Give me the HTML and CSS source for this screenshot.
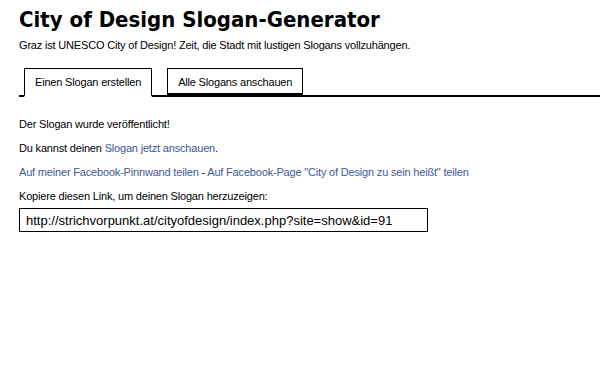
FILE: index.html
```html
<!DOCTYPE html>
<html lang="de">
<head>
    <meta charset="UTF-8">
    <title>City of Design Slogan-Generator</title>
    <link rel="stylesheet" href="styles.css">
</head>
<body>
    <div class="container">
        <h1>City of Design Slogan-Generator</h1>
        <p class="intro">Graz ist UNESCO City of Design! Zeit, die Stadt mit lustigen Slogans vollzuhängen.</p>

        <!-- Tabs -->
        <ul class="tabs">
            <li class="tab active"><a href="#">Einen Slogan erstellen</a></li>
            <li class="tab"><a href="#">Alle Slogans anschauen</a></li>
        </ul>

        <div class="content">
            <p>Der Slogan wurde veröffentlicht!</p>
            <p>Du kannst deinen <a href="#">Slogan jetzt anschauen</a>.</p>
            <p><a href="#">Auf meiner Facebook-Pinnwand teilen</a> - <a href="#">Auf Facebook-Page "City of Design zu sein heißt" teilen</a></p>
            <p class="last">Kopiere diesen Link, um deinen Slogan herzuzeigen:</p>
            <input class="share-link" type="text" value="http://strichvorpunkt.at/cityofdesign/index.php?site=show&amp;id=91">
        </div>
    </div>
</body>
</html>
```

FILE: styles.css
```css
body {
    font-family: 'Liberation Sans', Arial, sans-serif;
    font-size: 11px;
    letter-spacing: -0.18px;
    color: #000;
    background-color: #fff;
    margin: 0;
    padding: 0;
}
.container {
    padding: 6px 0 0 19px;
}
h1 {
    font-family: 'DejaVu Sans Condensed', 'DejaVu Sans', Verdana, sans-serif;
    font-stretch: condensed;
    font-size: 22px;
    font-weight: bold;
    letter-spacing: 0;
    margin: 0;
    line-height: 28px;
}
.intro {
    margin: 5px 0 0 0;
}
.tabs {
    list-style: none;
    margin: 17px 0 0 0;
    padding: 0 0 0 5px;
    display: flex;
    gap: 15px;
    border-bottom: 2px solid #000;
}
.tab {
    border: 1px solid #000;
    border-bottom: none;
    margin-bottom: -2px;
    background-color: #fff;
    height: 26px;
    padding: 0 10px;
    line-height: 26px;
}
.tab a {
    color: #000;
    text-decoration: none;
}
.tab.active {
    border-bottom: 2px solid #fff;
}
.tab:not(.active) {
    height: 24px;
    border-bottom: 2px solid #000;
}
.content {
    padding-top: 21px;
}
.content p {
    margin: 0 0 11px 0;
    line-height: 13px;
}
.content p.last {
    margin-bottom: 5px;
}
.content a {
    color: #3b5998;
    text-decoration: none;
}
.share-link {
    width: 409px;
    height: 24px;
    box-sizing: border-box;
    border: 1px solid #000;
    padding: 0 6px;
    margin: 0;
    font-family: 'Liberation Sans', Arial, sans-serif;
    font-size: 13px;
    letter-spacing: 0;
    color: #000;
    outline: none;
}
```
